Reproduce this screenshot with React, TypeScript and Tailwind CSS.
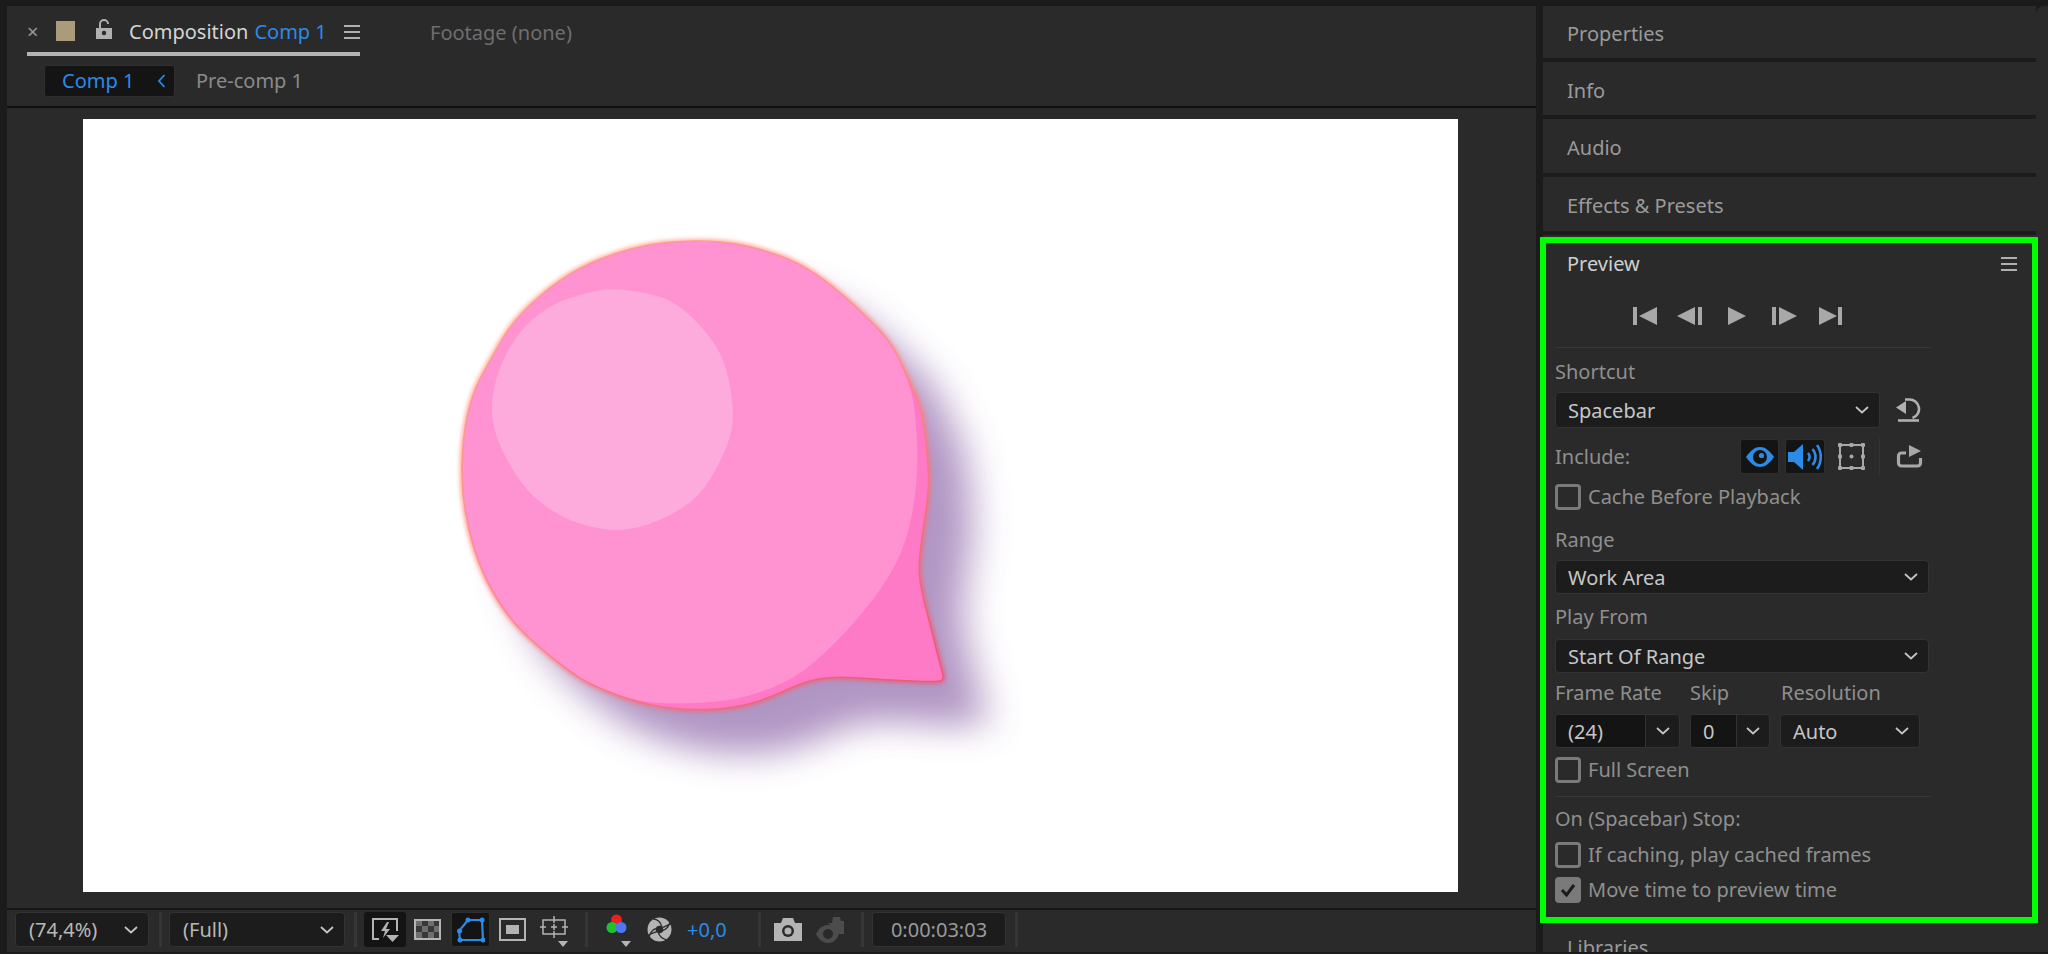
import type { ReactNode } from "react";

type Pt = [number, number];

// outline points, same units as the group transform below
const OUTLINE: Pt[] = [
  [680, 82], [800, 88], [920, 125], [1000, 170], [1080, 240], [1140, 300], [1195, 365], [1240, 470],
  [1270, 540], [1285, 680], [1287, 760], [1270, 880], [1260, 970], [1270, 1040], [1290, 1120], [1318, 1240],
  [1326, 1268], [1310, 1276], [1180, 1270], [1045, 1260], [970, 1275], [880, 1320], [800, 1345], [700, 1352],
  [620, 1345], [550, 1330], [470, 1300], [400, 1265], [300, 1180], [230, 1110], [170, 1010], [130, 900],
  [105, 760], [108, 620], [130, 500], [180, 400], [235, 300], [330, 205], [430, 140], [560, 95],
];

const FRONT: Pt[] = [
  [680, 84], [800, 90], [920, 127], [1000, 172], [1080, 242], [1140, 302], [1195, 367], [1238, 470],
  [1252, 540], [1260, 680], [1250, 800], [1222, 920], [1170, 1020], [1080, 1140], [970, 1250], [880, 1298],
  [780, 1328], [640, 1335], [550, 1328], [470, 1298], [400, 1263], [300, 1178], [232, 1108], [172, 1008],
  [132, 898], [107, 760], [110, 620], [132, 500], [182, 400], [237, 300], [332, 207], [432, 142], [560, 97],
];

const HIGHLIGHT: Pt[] = [
  [480, 212], [560, 220], [640, 245], [710, 310], [770, 400], [792, 520], [790, 600], [760, 680], [710, 770],
  [630, 830], [520, 870], [420, 855], [340, 820], [270, 760], [215, 670], [185, 590], [180, 510], [205, 410],
  [260, 315], [340, 250], [420, 225],
];

function smooth(pts: Pt[]) {
  const mid = (a: Pt, b: Pt) => [(a[0] + b[0]) / 2, (a[1] + b[1]) / 2].join(" ");
  let d = "M" + mid(pts[pts.length - 1], pts[0]);
  pts.forEach((p, i) => {
    d += " Q" + p.join(" ") + " " + mid(p, pts[(i + 1) % pts.length]);
  });
  return d + " Z";
}

function Bubble() {
  const outline = smooth(OUTLINE);
  return (
    <svg className="block w-full h-full" viewBox="0 0 1375 773">
      <defs>
        <linearGradient id="edge" x1="0.1" y1="0" x2="0.8" y2="1">
          <stop offset="0" stopColor="#ffa58f" />
          <stop offset="0.55" stopColor="#ff8a86" />
          <stop offset="1" stopColor="#ee5a78" />
        </linearGradient>
        <filter id="shadow" x="-30%" y="-30%" width="160%" height="160%">
          <feGaussianBlur stdDeviation="48" />
        </filter>
        <filter id="glow" x="-10%" y="-10%" width="120%" height="120%">
          <feGaussianBlur stdDeviation="6" />
        </filter>
        <filter id="soft" x="-5%" y="-5%" width="110%" height="110%">
          <feGaussianBlur stdDeviation="2" />
        </filter>
      </defs>
      <g transform="translate(337 91) scale(0.3954 0.37)">
        <path d={outline} fill="#7d4f9b" opacity="0.6" filter="url(#shadow)" transform="translate(110 120)" />
        <path d={outline} fill="url(#edge)" stroke="url(#edge)" strokeWidth="12" opacity="0.85" filter="url(#glow)" />
        <path d={outline} fill="#ff7ac6" stroke="url(#edge)" strokeWidth="4" filter="url(#soft)" />
        <path d={smooth(FRONT)} fill="#ff93d2" filter="url(#soft)" />
        <path d={smooth(HIGHLIGHT)} fill="#fdabdc" />
      </g>
    </svg>
  );
}

function Chevron({ className = "" }: { className?: string }) {
  return (
    <svg className={"w-[14px] h-[8px] shrink-0 " + className} viewBox="0 0 14 8" fill="none" stroke="#c4c4c4" strokeWidth="1.8">
      <path d="M1 1l6 5.5L13 1" />
    </svg>
  );
}

function Hamburger({ className = "" }: { className?: string }) {
  return (
    <div className={"flex shrink-0 flex-col justify-between " + className}>
      <div className="h-[2px] bg-[#b0b0b0]" />
      <div className="h-[2px] bg-[#b0b0b0]" />
      <div className="h-[2px] bg-[#b0b0b0]" />
    </div>
  );
}

function Select({ label, width, height }: { label: string; width: string; height: string }) {
  return (
    <div className={"flex items-center justify-between rounded-[4px] border border-[#333333] bg-[#1c1c1c] pl-[12px] pr-[10px] text-[#c6c6c6] " + width + " " + height}>
      <span className="pt-[2px]">{label}</span>
      <Chevron />
    </div>
  );
}

function Combo({ value, width, inner }: { value: string; width: string; inner: string }) {
  return (
    <div className={"flex h-[34px] rounded-[4px] border border-[#333333] bg-[#1c1c1c] text-[#c6c6c6] " + width}>
      <div className={"flex items-center rounded-l-[3px] bg-[#141414] pl-[12px] pt-[2px] " + inner}>{value}</div>
      <div className="flex flex-1 items-center justify-center border-l border-[#333333]">
        <Chevron />
      </div>
    </div>
  );
}

function Check({ label, checked = false }: { label: string; checked?: boolean }) {
  return (
    <div className="flex h-[26px] items-center text-[#8f8f8f]">
      <div className={"flex h-[26px] w-[26px] items-center justify-center rounded-[4px] border-[3px] border-[#7a7a7a] " + (checked ? "bg-[#7a7a7a]" : "bg-transparent")}>
        {checked && (
          <svg width="16" height="14" viewBox="0 0 16 14" fill="none" stroke="#1c1c1c" strokeWidth="3">
            <path d="M2 7l4.5 5L14 2" />
          </svg>
        )}
      </div>
      <span className="ml-[7px]">{label}</span>
    </div>
  );
}

function Label({ children, className = "" }: { children: ReactNode; className?: string }) {
  return <div className={"flex h-[24px] items-center text-[#8f8f8f] " + className}>{children}</div>;
}

function Collapsed({ title, height }: { title: string; height: string }) {
  return (
    <div className={"flex shrink-0 items-center border-b-4 border-[#1b1b1b] pl-[24px] pt-[4px] text-[#9a9a9a] " + height}>{title}</div>
  );
}

function Sep({ className = "" }: { className?: string }) {
  return <div className={"h-[35px] w-[3px] shrink-0 bg-[#363636] " + className} />;
}

function Transport() {
  const c = "#a8a8a8";
  return (
    <div className="flex h-[62px] items-center pl-[87px]">
      <svg width="24" height="18" viewBox="0 0 24 18" fill={c}><rect width="4" height="18" /><path d="M24 0v18L6 9z" /></svg>
      <svg className="ml-[20px]" width="25" height="18" viewBox="0 0 25 18" fill={c}><path d="M18 0v18L0 9z" /><rect x="21" width="4" height="18" /></svg>
      <svg className="ml-[26px]" width="18" height="18" viewBox="0 0 18 18" fill={c}><path d="M0 0l18 9-18 9z" /></svg>
      <svg className="ml-[26px]" width="25" height="18" viewBox="0 0 25 18" fill={c}><rect width="4" height="18" /><path d="M7 0l18 9-18 9z" /></svg>
      <svg className="ml-[22px]" width="23" height="18" viewBox="0 0 23 18" fill={c}><path d="M0 0l18 9-18 9z" /><rect x="19" width="4" height="18" /></svg>
    </div>
  );
}

function IncludeRow() {
  const blue = "#2b8be6";
  return (
    <div className="mt-[11px] flex h-[35px] items-center text-[#8f8f8f]">
      <span className="w-[185px]">Include:</span>
      <div className="flex h-[35px] w-[39px] items-center justify-center rounded-[3px] border border-[#2f2f2f] bg-[#141414]">
        <svg width="28" height="20" viewBox="0 0 28 20">
          <path d="M0 10C5 3 9 0 14 0s9 3 14 10c-5 7-9 10-14 10S5 17 0 10z" fill={blue} />
          <circle cx="14" cy="10" r="7" fill="#141414" />
          <circle cx="15.5" cy="8.5" r="2.6" fill={blue} />
        </svg>
      </div>
      <div className="ml-[6px] flex h-[35px] w-[40px] items-center justify-center rounded-[3px] border border-[#2f2f2f] bg-[#141414]">
        <svg width="36" height="30" viewBox="0 0 36 30" fill="none">
          <path d="M1 10h6L16 2v26l-9-8H1z" fill={blue} />
          <path d="M21 11c2 2.5 2 5.5 0 8M25.5 7c4 4.5 4 11.5 0 16M30 3c5 7 5 17 0 24" stroke={blue} strokeWidth="2.6" />
        </svg>
      </div>
      <svg className="ml-[13px]" width="27" height="27" viewBox="0 0 27 27" fill="#a8a8a8">
        <path d="M2 2h23v23H2z" fill="none" stroke="#a8a8a8" strokeWidth="2" />
        <rect width="4" height="4" rx="1" /><rect x="23" width="4" height="4" rx="1" /><rect y="23" width="4" height="4" rx="1" /><rect x="23" y="23" width="4" height="4" rx="1" />
        <rect x="11.5" width="4" height="4" rx="1" /><rect x="11.5" y="23" width="4" height="4" rx="1" /><rect y="11.5" width="4" height="4" rx="1" /><rect x="23" y="11.5" width="4" height="4" rx="1" />
        <circle cx="13.5" cy="13.5" r="2" />
      </svg>
      <div className="ml-[14px] h-[37px] w-px bg-[#333333]" />
      <svg className="ml-[16px]" width="27" height="23" viewBox="0 0 27 23" fill="none">
        <path d="M10 8H5.5a3 3 0 0 0-3 3v7a3 3 0 0 0 3 3h16a3 3 0 0 0 3-3v-5" stroke="#a8a8a8" strokeWidth="3.2" />
        <path d="M13 0l12 6-12 6z" fill="#a8a8a8" />
      </svg>
    </div>
  );
}

function PreviewPanel() {
  return (
    <div className="relative -ml-[3px] mt-[2px] h-[686px] w-[498px] shrink-0 border-[6px] border-[#00ff00]">
      <div className="flex h-[42px] items-center justify-between pl-[21px] pr-[15px] text-[#cfcfcf]">
        <span>Preview</span>
        <Hamburger className="h-[14px] w-[16px]" />
      </div>
      <Transport />
      <div className="ml-[9px] w-[376px]">
        <div className="h-px bg-[#363636]" />
        <Label className="mt-[12px]">Shortcut</Label>
        <div className="mt-[8px] flex items-center">
          <Select label="Spacebar" width="w-[325px]" height="h-[36px]" />
          <svg className="ml-[16px]" width="25" height="24" viewBox="0 0 25 24" fill="none">
            <path d="M9 1.5h4a9.5 9.5 0 0 1 3.5 18.5" stroke="#b0b0b0" strokeWidth="2.6" />
            <path d="M0 9.5L10 3v13z" fill="#b0b0b0" />
            <path d="M2 22.5h21" stroke="#b0b0b0" strokeWidth="2.6" />
          </svg>
        </div>
        <IncludeRow />
        <div className="mt-[10px]"><Check label="Cache Before Playback" /></div>
        <Label className="mt-[18px]">Range</Label>
        <div className="mt-[8px]"><Select label="Work Area" width="w-[374px]" height="h-[34px]" /></div>
        <Label className="mt-[11px]">Play From</Label>
        <div className="mt-[10px]"><Select label="Start Of Range" width="w-[374px]" height="h-[34px]" /></div>
        <div className="mt-[8px] flex h-[24px] items-center text-[#8f8f8f]">
          <span className="w-[135px]">Frame Rate</span>
          <span className="w-[91px]">Skip</span>
          <span>Resolution</span>
        </div>
        <div className="mt-[9px] flex">
          <Combo value="(24)" width="w-[125px]" inner="w-[89px]" />
          <div className="ml-[10px]"><Combo value="0" width="w-[80px]" inner="w-[45px]" /></div>
          <div className="ml-[10px]"><Select label="Auto" width="w-[140px]" height="h-[34px]" /></div>
        </div>
        <div className="mt-[9px]"><Check label="Full Screen" /></div>
        <div className="mt-[13px] h-px bg-[#363636]" />
        <Label className="mt-[10px]">On (Spacebar) Stop:</Label>
        <div className="mt-[11px]"><Check label="If caching, play cached frames" /></div>
        <div className="mt-[9px]"><Check label="Move time to preview time" checked /></div>
      </div>
    </div>
  );
}

function ToolbarIcons() {
  const g = "#b4b4b4";
  const blue = "#2b8be6";
  return (
    <>
      <Sep className="ml-[9px]" />
      <div className="ml-[7px] flex h-[35px] w-[42px] shrink-0 items-center justify-center rounded-[3px] bg-[#141414]">
        <svg width="28" height="26" viewBox="0 0 28 26" fill="none">
          <path d="M8 22H2V2h24v12" stroke={g} strokeWidth="2" />
          <path d="M16 5l-6 9h4l-2 7 7-9h-4l3-7z" fill={g} />
          <path d="M15 18h13l-6.5 7z" fill={g} />
        </svg>
      </div>
      <svg className="ml-[8px] shrink-0" width="27" height="21" viewBox="0 0 27 21">
        <rect x="1" y="1" width="25" height="19" fill="#383838" stroke={g} strokeWidth="2" />
        <g fill="#6e6e6e"><rect x="2" y="2" width="6" height="5" /><rect x="14" y="2" width="6" height="5" /><rect x="8" y="7" width="6" height="6" /><rect x="20" y="7" width="5" height="6" /><rect x="2" y="13" width="6" height="6" /><rect x="14" y="13" width="6" height="6" /></g>
      </svg>
      <div className="ml-[10px] flex h-[35px] w-[39px] shrink-0 items-center justify-center rounded-[3px] border border-[#2f2f2f] bg-[#141414]">
        <svg width="28" height="26" viewBox="0 0 28 26" fill="none" stroke={blue} strokeWidth="2.2">
          <path d="M11 3h14l1 20H3l-1-9z" />
          <g fill={blue} stroke="none"><circle cx="11" cy="3" r="2.5" /><circle cx="25" cy="3" r="2.5" /><circle cx="26" cy="23" r="2.5" /><circle cx="3" cy="23" r="2.5" /><circle cx="2.5" cy="14" r="2.5" /></g>
        </svg>
      </div>
      <svg className="ml-[9px] shrink-0" width="27" height="23" viewBox="0 0 27 23" fill="none">
        <rect x="1" y="1" width="25" height="21" stroke={g} strokeWidth="2" />
        <rect x="7" y="7" width="13" height="9" fill={g} />
      </svg>
      <svg className="ml-[14px] shrink-0" width="28" height="34" viewBox="0 0 28 34" fill="none" stroke={g} strokeWidth="1.5">
        <path d="M3 7h22v14H3zM14 3v7M14 18v7M0 14h6M22 14h6M11 14h6M14 11v6" />
        <path d="M18 28h10l-5 6z" fill={g} stroke="none" />
      </svg>
      <Sep className="ml-[17px]" />
      <svg className="ml-[18px] shrink-0" width="26" height="34" viewBox="0 0 26 34">
        <circle cx="10.5" cy="7" r="5.5" fill="#f01e1e" />
        <circle cx="6" cy="14.5" r="5.5" fill="#1fc22a" />
        <circle cx="15" cy="14.5" r="5.5" fill="#4a78f5" />
        <path d="M15 28h10l-5 6z" fill={g} />
      </svg>
      <svg className="ml-[15px] shrink-0" width="25" height="25" viewBox="0 0 24 24" fill={g}>
        <circle cx="12" cy="12" r="11.5" />
        <circle cx="12" cy="12" r="3.6" fill="#2a2a2a" />
        <path d="M14 9C13 5 10 2 6 2M15 13c3-1 6-3 7-8M11 15c1 4 4 6 8 7M9 11c-3 1-6 4-7 8M9.5 14C6 15 3 17 1.5 17M14.5 10C18 9 21 7 22.5 7" stroke="#2a2a2a" strokeWidth="1.3" fill="none" />
      </svg>
      <span className="ml-[15px] w-[42px] shrink-0 text-[#2b8be6]">+0,0</span>
      <Sep className="ml-[29px]" />
      <svg className="ml-[13px] shrink-0" width="28" height="23" viewBox="0 0 28 23">
        <path d="M0 5h7l2-5h10l2 5h7v18H0z" fill={g} />
        <circle cx="14" cy="13" r="6" fill="#2a2a2a" />
        <circle cx="14" cy="13" r="3.5" fill={g} />
      </svg>
      <svg className="ml-[14px] shrink-0" width="28" height="26" viewBox="0 0 28 26" fill="#4c4c4c">
        <path d="M12 6h4l1-6h7l1 4h3v13h-6z" />
        <path d="M0 17C3 11 7 8 12 8s9 3 11 9c-2 6-6 9-11 9S3 23 0 17z" />
        <circle cx="12" cy="17" r="5" fill="#2a2a2a" />
      </svg>
      <Sep className="ml-[17px]" />
      <div className="ml-[8px] flex h-[35px] w-[134px] shrink-0 items-center justify-center rounded-[4px] border border-[#333333] bg-[#1c1c1c] text-[#9a9a9a]">0:00:03:03</div>
      <Sep className="ml-[9px]" />
    </>
  );
}

export default function App() {
  return (
    <div className="flex h-[954px] w-[2048px] overflow-hidden whitespace-nowrap bg-[#1b1b1b] pt-[6px] font-['Noto_Sans',sans-serif] text-[20px] leading-none">
      {/* Composition panel */}
      <div className="ml-[7px] flex h-[946px] w-[1529px] shrink-0 flex-col bg-[#2a2a2a]">
        <div className="flex h-[50px] shrink-0 pl-[20px]">
          <div className="flex h-[50px] w-[333px] items-center border-b-4 border-[#b4b4b4] pt-[6px]">
            <span className="w-[29px] shrink-0 text-[#9a9a9a]">×</span>
            <div className="h-[20px] w-[19px] shrink-0 -translate-y-[1px] bg-[#ac9b7a]" />
            <svg className="ml-[21px] -mt-[6px] shrink-0" width="16" height="20" viewBox="0 0 16 20" fill="none">
              <path d="M4 9V5a4 4 0 0 1 8 0" stroke="#b0b0b0" strokeWidth="2" />
              <path d="M0 9h16v11H0z" fill="#b0b0b0" />
              <circle cx="8" cy="14" r="2.2" fill="#2a2a2a" />
            </svg>
            <span className="ml-[17px] text-[#d4d4d4]">Composition</span>
            <span className="ml-[6px] text-[#2b8be6]">Comp 1</span>
            <Hamburger className="ml-[17px] h-[14px] w-[16px]" />
          </div>
          <span className="ml-[70px] flex h-[54px] items-center text-[#6e6e6e]">Footage (none)</span>
        </div>
        <div className="flex h-[50px] shrink-0 items-center pl-[37px]">
          <div className="flex h-[32px] w-[131px] items-center rounded-[3px] border border-[#2f2f2f] bg-[#141414] pl-[17px] text-[#2b8be6]">
            <span>Comp 1</span>
            <svg className="ml-[23px]" width="9" height="14" viewBox="0 0 9 14" fill="none" stroke="#2b8be6" strokeWidth="1.8"><path d="M7.5 1L2 7l5.5 6" /></svg>
          </div>
          <span className="ml-[21px] text-[#8a8a8a]">Pre-comp 1</span>
        </div>
        <div className="h-[802px] shrink-0 border-t-2 border-[#101010] pl-[76px] pt-[11px]">
          <div className="h-[773px] w-[1375px] bg-white">
            <Bubble />
          </div>
        </div>
        <div className="flex flex-1 items-start border-t-2 border-[#161616] pl-[8px] pt-[2px]">
          <div className="flex h-[35px] w-[134px] shrink-0 items-center justify-between rounded-[4px] border border-[#333333] bg-[#1c1c1c] pl-[13px] pr-[10px] text-[#b8b8b8]">
            <span>(74,4%)</span>
            <Chevron />
          </div>
          <Sep className="ml-[10px]" />
          <div className="ml-[7px] flex h-[35px] w-[176px] shrink-0 items-center justify-between rounded-[4px] border border-[#333333] bg-[#1c1c1c] pl-[13px] pr-[10px] text-[#b8b8b8]">
            <span>(Full)</span>
            <Chevron />
          </div>
          <div className="flex h-[35px] items-center">
            <ToolbarIcons />
          </div>
        </div>
      </div>

      {/* Right column */}
      <div className="ml-[7px] flex h-[946px] w-[493px] shrink-0 flex-col bg-[#2a2a2a]">
        <Collapsed title="Properties" height="h-[56px]" />
        <Collapsed title="Info" height="h-[57px]" />
        <Collapsed title="Audio" height="h-[58px]" />
        <Collapsed title="Effects & Presets" height="h-[58px]" />
        <PreviewPanel />
        <div className="h-[29px] overflow-hidden pl-[24px] pt-[15px] text-[#9a9a9a]">Libraries</div>
      </div>
      <div className="h-[946px] w-[12px] shrink-0 rounded-tl-[8px] bg-[#2a2a2a]" />
    </div>
  );
}
